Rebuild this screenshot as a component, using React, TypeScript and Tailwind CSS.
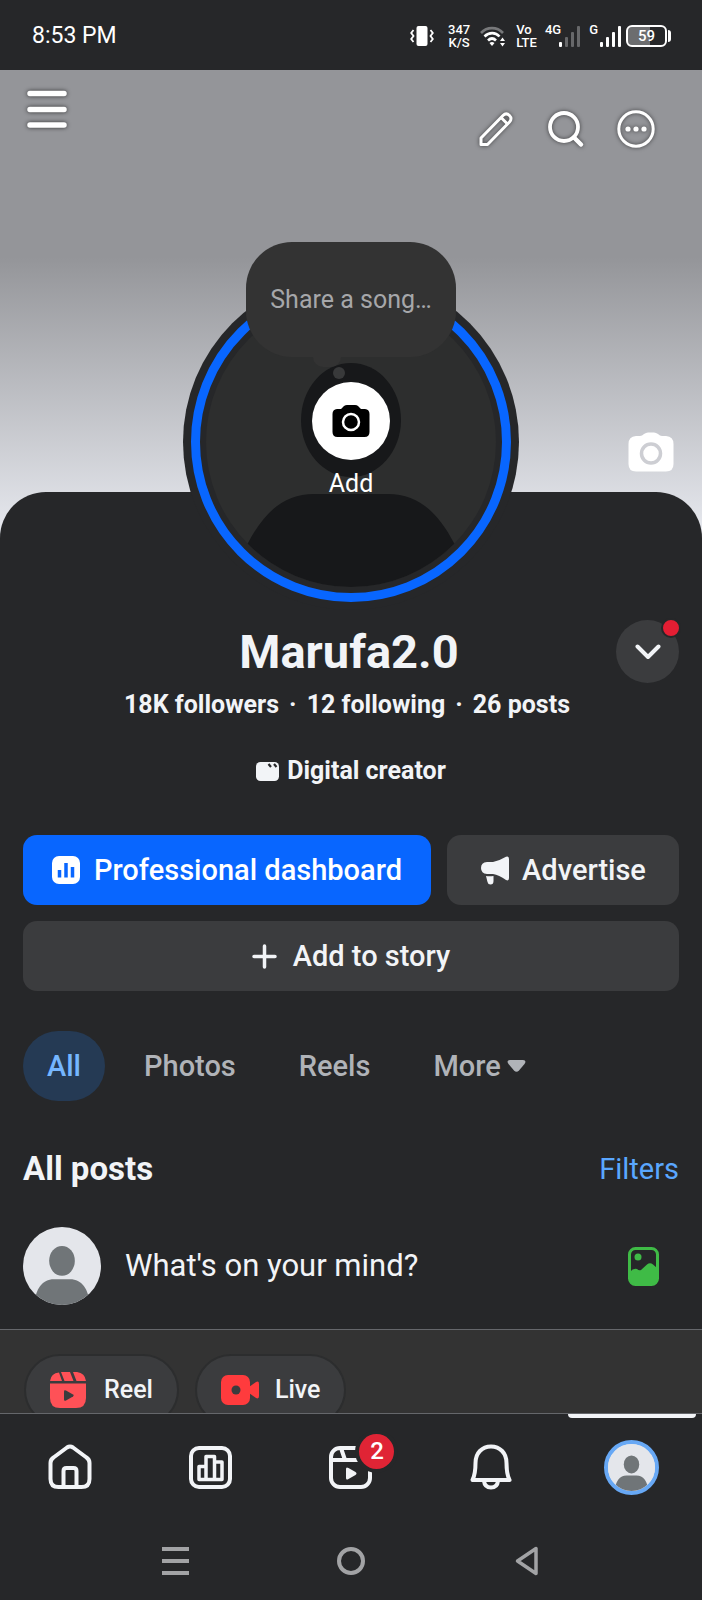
import { useState } from "react";

const TABS = ["All", "Photos", "Reels"];

function Person({ className }: { className?: string }) {
  return (
    <svg viewBox="0 0 76 76" className={className} aria-hidden="true">
      <clipPath id="person-clip">
        <circle cx="38" cy="38" r="38" />
      </clipPath>
      <g clipPath="url(#person-clip)">
        <rect width="76" height="76" fill="#e4e6eb" />
        <ellipse cx="38" cy="33" rx="12.5" ry="14.5" fill="#707578" />
        <path d="M11 76C12 60 19 51 30 51H46C57 51 64 60 65 76Z" fill="#707578" />
      </g>
    </svg>
  );
}

function SignalBars({ active }: { active: number }) {
  return (
    <svg width="22" height="22" viewBox="0 0 22 22" aria-hidden="true">
      {[5, 10, 15, 21].map((h, i) => (
        <rect key={h} x={i * 6} y={22 - h} width="3" height={h} rx="1" fill={i < active ? "#fff" : "#67686a"} />
      ))}
    </svg>
  );
}

function StatusBar() {
  return (
    <div className="flex h-[70px] shrink-0 items-center justify-between pl-8 pr-[31px] pt-0.5 text-white">
      <span className="text-[23px] leading-8">8:53 PM</span>
      <div className="flex items-center text-[13px] font-medium leading-[13px]">
        <svg width="24" height="20" viewBox="0 0 24 20" className="mr-3.5" aria-hidden="true">
          <rect x="6.500" y="0" width="11" height="20" rx="2" fill="#fff" />
          <path d="M3.500 4L1.200 7L3.500 10L1.200 13L3.500 16M20.500 4L22.800 7L20.500 10L22.800 13L20.500 16" fill="none" stroke="#fff" strokeWidth="1.800" />
        </svg>
        <span className="mr-2.5 text-center">347<br />K/S</span>
        <svg width="26" height="22" viewBox="0 0 26 22" className="mr-2.5" fill="none" strokeWidth="2.600" aria-hidden="true">
          <path d="M1 8C7 1.500 17 1.500 23 8" stroke="#77787a" />
          <path d="M4.500 11.500C9 7 15.500 7 19.500 11.500M8 15.500C10.500 13 13.500 13 16 15.500" stroke="#fff" />
          <path d="M9.500 18L12 21L14.500 18Q12 16 9.500 18Z" fill="#fff" />
          <path d="M20 16L22.500 12.500L25 16ZM20 18L22.500 21.500L25 18Z" fill="#fff" />
        </svg>
        <span className="mr-2">Vo<br />LTE</span>
        <span className="-mr-0.5 self-start">4G</span>
        <SignalBars active={1} />
        <span className="ml-2 mr-0.5 self-start">G</span>
        <SignalBars active={4} />
        <div className="ml-1 flex items-center">
          <div className="flex h-[22px] w-[41px] items-center justify-center rounded-md border-2 border-white bg-[linear-gradient(90deg,#6c6d6f_59%,transparent_59%)] text-[15px]">
            59
          </div>
          <div className="ml-px h-3 w-[3px] rounded-r bg-white" />
        </div>
      </div>
    </div>
  );
}

function CoverBar() {
  return (
    <div className="flex items-start justify-between pl-[27px] pr-[47px] pt-5 text-white">
      <button aria-label="Menu" className="drop-shadow-[0_0_2px_rgba(0,0,0,0.7)]">
        <svg width="40" height="38" viewBox="0 0 40 38" stroke="currentColor" strokeWidth="5.500" strokeLinecap="round">
          <path d="M3 3.500H37M3 19.500H37M3 35H37" />
        </svg>
      </button>
      <div className="mt-5 flex gap-8 drop-shadow-[0_0_2px_rgba(0,0,0,0.6)]">
        <button aria-label="Edit">
          <svg width="38" height="38" viewBox="0 0 38 38" fill="none" stroke="currentColor" strokeWidth="3" strokeLinejoin="round">
            <path d="M4 34.500V28L26 5.500C28 3.500 30.500 3.500 32.500 5.500C34.500 7.500 34.500 10 32.500 12L10.500 34.500Z" />
            <path d="M24 7.500L30.500 14" />
          </svg>
        </button>
        <button aria-label="Search">
          <svg width="38" height="38" viewBox="0 0 38 38" fill="none" stroke="currentColor" strokeWidth="3.800" strokeLinecap="round">
            <circle cx="17" cy="17" r="14" />
            <path d="M27 27.500L34 34.500" strokeWidth="4.500" />
          </svg>
        </button>
        <button aria-label="More options">
          <svg width="38" height="38" viewBox="0 0 38 38" fill="none" stroke="currentColor" strokeWidth="3">
            <circle cx="19" cy="19" r="17.200" />
            <g fill="currentColor" stroke="none">
              <circle cx="11" cy="19" r="2.600" />
              <circle cx="19" cy="19" r="2.600" />
              <circle cx="27" cy="19" r="2.600" />
            </g>
          </svg>
        </button>
      </div>
    </div>
  );
}

function ProfilePhoto() {
  return (
    <div className="relative mx-auto -mt-[218px] size-[336px] rounded-full bg-[#262729] p-2">
      <div className="size-full rounded-full border-[9px] border-[#0866ff] p-1.5">
        <svg viewBox="0 0 290 290" className="size-full" aria-hidden="true">
          <clipPath id="photo-clip">
            <circle cx="145" cy="145" r="145" />
          </clipPath>
          <g clipPath="url(#photo-clip)">
            <rect width="290" height="290" fill="#2d2e2e" />
            <ellipse cx="145" cy="123" rx="50" ry="57" fill="#17181a" />
            <path d="M42 246C60 212 80 197 108 197H182C210 197 230 212 248 246L290 290H0Z" fill="#17181a" />
          </g>
        </svg>
      </div>
      <button className="absolute inset-x-0 top-[108px] flex flex-col items-center text-[25px] leading-8 text-white">
        <span className="mb-2 flex size-[78px] items-center justify-center rounded-full bg-white">
          <svg width="38" height="34" viewBox="0 0 38 34" aria-hidden="true">
            <path d="M5 5H9L12 2Q13.500 1 15 1H23Q25 1 26 2L29 5H33Q37.500 5.500 37.500 10V28Q37.500 33 32.500 33H5.500Q0.500 33 0.500 28V10Q0.500 5.500 5 5Z" fill="#000" />
            <circle cx="19" cy="18" r="8" fill="none" stroke="#fff" strokeWidth="2.500" />
          </svg>
        </span>
        Add
      </button>
      <button className="absolute -top-8 left-[63px] h-[115px] w-[210px] rounded-[46px] bg-[#333] text-[25px] text-[#a6a7aa]">
        Share a song…
        <span className="absolute left-[67px] top-full h-2.5 w-7 rounded-b-full bg-[#333]" />
        <span className="absolute left-[87px] top-[125px] size-3 rounded-full bg-[#38393a]" />
      </button>
    </div>
  );
}

function Actions() {
  return (
    <div className="mt-12 flex flex-wrap gap-4 text-[29px] font-medium leading-8">
      <button className="flex h-[70px] grow items-center justify-center gap-3.5 rounded-[14px] bg-[#0866ff] text-white">
        <svg width="28" height="28" viewBox="0 0 28 28" aria-hidden="true">
          <rect width="28" height="28" rx="7" fill="#fff" />
          <path d="M7.500 14V21.500M14 7V21.500M20.500 11V21.500" stroke="#0866ff" strokeWidth="3.500" />
        </svg>
        Professional dashboard
      </button>
      <button className="flex h-[70px] w-[232px] items-center justify-center gap-3 rounded-[14px] bg-[#3b3c3e]">
        <svg width="30" height="29" viewBox="0 0 30 29" fill="currentColor" aria-hidden="true">
          <path d="M7 6H13Q19 5 26 0.800Q29 -0.500 29 3V22Q29 25.500 26 24Q19 19 13 18H7Q1 17.500 1 12Q1 6.500 7 6Z" />
          <path d="M6 20Q9 20.500 13.500 20V25Q13.500 28.500 10.500 28.500Q8 28.500 7.500 26Z" />
        </svg>
        Advertise
      </button>
      <button className="flex h-[70px] w-full items-center justify-center gap-4 rounded-[14px] bg-[#3b3c3e]">
        <svg width="25" height="25" viewBox="0 0 25 25" stroke="currentColor" strokeWidth="3.500" strokeLinecap="round" aria-hidden="true">
          <path d="M12.500 2V23M2 12.500H23" />
        </svg>
        Add to story
      </button>
    </div>
  );
}

function Profile() {
  const [tab, setTab] = useState("All");

  return (
    <section className="relative -mt-[46px] flow-root rounded-t-[46px] bg-[#262729] px-[23px] pb-6">
      <ProfilePhoto />

      <div className="mt-2.5 grid grid-cols-[63px_1fr_63px] items-center">
        <h1 className="col-start-2 pr-1 text-center text-[47px] font-bold leading-[56px]">Marufa2.0</h1>
        <button aria-label="Switch profile" className="relative flex size-[63px] items-center justify-center rounded-full bg-[#3b3c3e]">
          <svg width="26" height="16" viewBox="0 0 26 16" fill="none" stroke="currentColor" strokeWidth="4" strokeLinecap="round" strokeLinejoin="round">
            <path d="M2.500 2.500L13 13L23.500 2.500" />
          </svg>
          <span className="absolute -right-0.5 -top-0.5 size-5 rounded-full border-2 border-[#262729] bg-[#e41e33]" />
        </button>
      </div>

      <p className="mt-1.5 flex justify-center gap-2.5 pr-2 text-[25px] font-bold leading-8">
        <span>18K followers</span>
        <span>·</span>
        <span>12 following</span>
        <span>·</span>
        <span>26 posts</span>
      </p>
      <p className="mt-[34px] flex items-center justify-center gap-2 text-[25px] font-bold leading-8">
        <svg width="23" height="19" viewBox="0 0 23 19" aria-hidden="true">
          <rect width="23" height="19" rx="4.500" fill="currentColor" />
          <path d="M12.500 2L15 5M18 2L20.500 5" stroke="#262729" strokeWidth="2.200" />
        </svg>
        Digital creator
      </p>

      <Actions />

      <nav className="mt-10 flex gap-[15px] text-[29px] font-medium leading-8 text-[#b0b3b8]">
        {TABS.map((t) => (
          <button
            key={t}
            onClick={() => setTab(t)}
            className={`h-[70px] rounded-full px-6 ${t === tab ? "bg-[#253a54] text-[#75b6ff]" : ""}`}
          >
            {t}
          </button>
        ))}
        <button className="flex h-[70px] items-center gap-1.5 px-6">
          More
          <svg width="19" height="12" viewBox="0 0 19 12" fill="currentColor" aria-hidden="true">
            <path d="M3 0H16Q20 0.500 17.500 4L12 10.500Q9.500 13 7 10.500L1.500 4Q-1 0.500 3 0Z" />
          </svg>
        </button>
      </nav>

      <div className="mt-12 flex items-center justify-between leading-10">
        <h2 className="text-[33px] font-bold">All posts</h2>
        <a href="#filters" className="text-[29px] text-[#5aa7ff]">Filters</a>
      </div>

      <div className="mt-[38px] flex items-center">
        <Person className="size-[78px] shrink-0" />
        <button className="grow px-6 text-left text-[31px] leading-10">What's on your mind?</button>
        <button aria-label="Add photo" className="mr-5">
          <svg width="31" height="39" viewBox="0 0 31 39">
            <rect x="1.500" y="1.500" width="28" height="36" rx="6" fill="none" stroke="#3fbb46" strokeWidth="3" />
            <circle cx="10" cy="10" r="3.500" fill="#3fbb46" />
            <path d="M2 25Q5 21 9 22Q11 24 13 23L19 17.500Q22 15 25 17.500L29 21V33Q29 37 25 37H6Q2 37 2 33Z" fill="#3fbb46" />
          </svg>
        </button>
      </div>
    </section>
  );
}

function CreateBar() {
  return (
    <div className="flex gap-4 border-t border-[#65676b] bg-[#333] px-6 py-6 text-[25px] font-medium leading-8">
      <button className="flex h-[72px] items-center gap-[18px] rounded-full border-2 border-[#2c2d2e] bg-[#3b3c3e] px-6">
        <svg width="36" height="36" viewBox="0 0 36 36" fill="#ff5157" aria-hidden="true">
          <path d="M0 9Q1 1 9 0.500L12 9ZM11 0H20L23.500 9H14.500ZM23 0H27Q35 1 36 9H26.500Z" />
          <path d="M0 11.500H36V26Q36 36 26 36H10Q0 36 0 26Z" />
          <path d="M14 19.500Q14 17.500 16 18.500L23 22.500Q24.500 23.500 23 24.500L16 28.500Q14 29.500 14 27.500Z" fill="#3b3c3e" />
        </svg>
        Reel
      </button>
      <button className="flex h-[72px] items-center gap-4 rounded-full border-2 border-[#2c2d2e] bg-[#3b3c3e] px-6">
        <svg width="38" height="30" viewBox="0 0 38 30" fill="#ff3b3d" aria-hidden="true">
          <rect width="29" height="30" rx="7" />
          <path d="M28 12L35 7Q38 5.500 38 9V21Q38 24.500 35 23L28 18Z" />
          <circle cx="15" cy="15" r="4.500" fill="#3b3c3e" />
        </svg>
        Live
      </button>
    </div>
  );
}

function BottomNav() {
  return (
    <nav className="grid h-[107px] shrink-0 grid-cols-5 border-t border-[#65676b]">
      <button aria-label="Home" className="flex items-center justify-center">
        <svg width="44" height="46" viewBox="0 0 44 46" fill="none" stroke="currentColor" strokeWidth="4" strokeLinejoin="round">
          <path d="M2.500 19Q2.500 15.500 5.500 13.500L19 3.500Q22 1.500 25 3.500L38.500 13.500Q41.500 15.500 41.500 19V35Q41.500 43 33.500 43H10.500Q2.500 43 2.500 35Z" />
          <path d="M15.500 43V27Q15.500 24 18.500 24H25.500Q28.500 24 28.500 27V43" />
        </svg>
      </button>
      <button aria-label="Dashboard" className="flex items-center justify-center">
        <svg width="43" height="43" viewBox="0 0 43 43" fill="none" stroke="currentColor" strokeWidth="4" strokeLinejoin="round">
          <rect x="2" y="2" width="39" height="39" rx="8" />
          <path d="M10 33.500V20.500H17V10.500H25.500V33.500ZM17 20.500V33.500M25.500 16H33V33.500H25.500" strokeWidth="3.500" />
        </svg>
      </button>
      <button aria-label="Reels, 2 new" className="flex items-center justify-center">
        <span className="relative">
          <svg width="43" height="43" viewBox="0 0 43 43" fill="none" stroke="currentColor" strokeWidth="4">
            <rect x="2" y="2" width="39" height="39" rx="9" />
            <path d="M2 14H41M12 2L16 14" />
            <path d="M17 23Q17 20.500 19.500 22L26.500 26Q28.500 27.500 26.500 29L19.500 33Q17 34.500 17 32Z" fill="currentColor" stroke="none" />
          </svg>
          <span className="absolute -top-3 left-[30px] flex size-[35px] items-center justify-center rounded-full bg-[#e02435] text-[24px] font-medium leading-none text-white ring-4 ring-[#262729]">
            2
          </span>
        </span>
      </button>
      <button aria-label="Notifications" className="flex items-center justify-center">
        <svg width="42" height="46" viewBox="0 0 42 46" fill="none" stroke="currentColor" strokeWidth="4" strokeLinejoin="round">
          <path d="M2.500 36C5 31 5.500 27 5.500 19C5.500 9 12 2.500 21 2.500C30 2.500 36.500 9 36.500 19C36.500 27 37 31 39.500 36Z" />
          <path d="M14 37C14.500 41.500 17 43.500 21 43.500C25 43.500 27.500 41.500 28 37" />
        </svg>
      </button>
      <button aria-label="Profile" className="relative flex items-center justify-center">
        <span className="absolute inset-x-1.5 top-0 h-1 rounded-b bg-[#f2f4f7]" />
        <span className="size-[55px] rounded-full border-4 border-[#67a8f5] bg-[#e4e6eb]">
          <Person className="size-full" />
        </span>
      </button>
    </nav>
  );
}

function SystemNav() {
  return (
    <div className="grid h-20 shrink-0 grid-cols-3 px-[12.5%] pt-0.5 text-[#a2a3a5]">
      <button aria-label="Recent apps" className="flex items-center justify-center">
        <svg width="27" height="28" viewBox="0 0 27 28" stroke="currentColor" strokeWidth="4">
          <path d="M0 2H27M0 14H27M0 26H27" />
        </svg>
      </button>
      <button aria-label="Home screen" className="flex items-center justify-center">
        <svg width="28" height="28" viewBox="0 0 28 28" fill="none" stroke="currentColor" strokeWidth="4">
          <circle cx="14" cy="14" r="12" />
        </svg>
      </button>
      <button aria-label="Back" className="flex items-center justify-center">
        <svg width="24" height="30" viewBox="0 0 24 30" fill="none" stroke="currentColor" strokeWidth="3.500" strokeLinejoin="round">
          <path d="M21 2.500V27.500L2.500 15Z" />
        </svg>
      </button>
    </div>
  );
}

export default function App() {
  return (
    <div className="flex h-screen flex-col bg-[#262729] font-['Roboto',sans-serif] text-[#f2f4f7]">
      <StatusBar />
      <main className="min-h-0 flex-1 overflow-y-auto [scrollbar-width:none]">
        <header className="flex h-[468px] flex-col justify-between bg-[linear-gradient(#949599_40%,#e8eaf0)]">
          <CoverBar />
          <button aria-label="Change cover photo" className="mb-[66px] mr-7 self-end">
            <svg width="46" height="40" viewBox="0 0 46 40">
              <path d="M8 4H12Q14 4 16 2Q18 0.500 20 0.500H26Q28 0.500 30 2Q32 4 34 4H38Q45.500 4.500 45.500 12V32Q45.500 39.500 38 39.500H8Q0.500 39.500 0.500 32V12Q0.500 4.500 8 4Z" fill="#fff" />
              <circle cx="23" cy="21.500" r="9.500" fill="none" stroke="#cdced3" strokeWidth="3.500" />
            </svg>
          </button>
        </header>
        <Profile />
        <CreateBar />
      </main>
      <BottomNav />
      <SystemNav />
    </div>
  );
}
